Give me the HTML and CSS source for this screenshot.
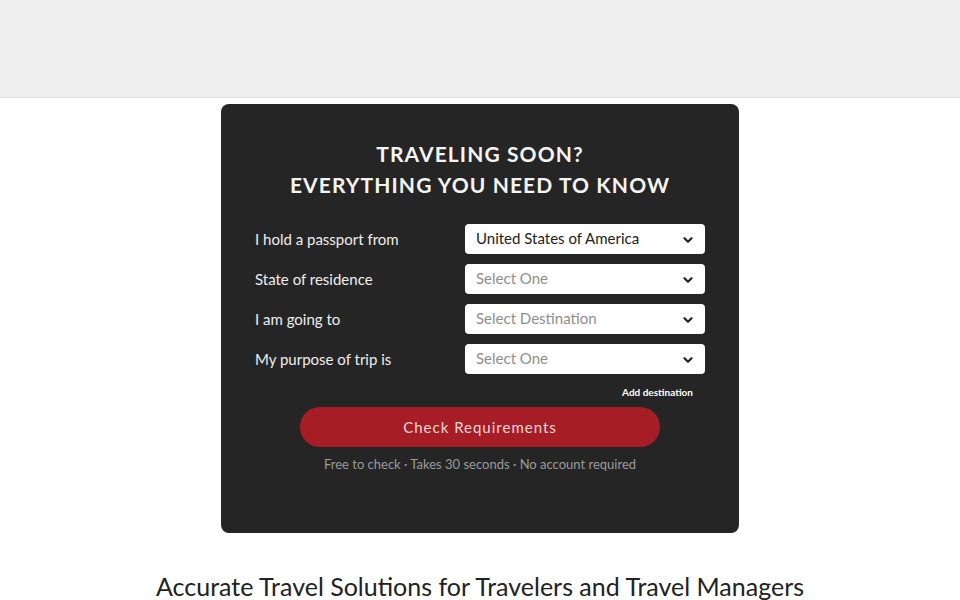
FILE: index.html
```html
<!DOCTYPE html>
<html lang="en">
<head>
<meta charset="utf-8">
<title>Traveling Soon?</title>
<link rel="stylesheet" href="styles.css">
</head>
<body>
<header class="topbar"></header>
<main class="main">
  <section class="card">
    <h1 class="card-title">TRAVELING SOON?<br>EVERYTHING YOU NEED TO KNOW</h1>
    <form class="form">
      <div class="row">
        <label class="label">I hold a passport from</label>
        <div class="select"><span class="value">United States of America</span><svg class="chev" viewBox="0 0 10 6"><path d="M1.5 1.2l3.5 3.5 3.5-3.5" fill="none" stroke="#222" stroke-width="2.2" stroke-linecap="round" stroke-linejoin="round"/></svg></div>
      </div>
      <div class="row">
        <label class="label">State of residence</label>
        <div class="select"><span class="placeholder">Select One</span><svg class="chev" viewBox="0 0 10 6"><path d="M1.5 1.2l3.5 3.5 3.5-3.5" fill="none" stroke="#222" stroke-width="2.2" stroke-linecap="round" stroke-linejoin="round"/></svg></div>
      </div>
      <div class="row">
        <label class="label">I am going to</label>
        <div class="select"><span class="placeholder">Select Destination</span><svg class="chev" viewBox="0 0 10 6"><path d="M1.5 1.2l3.5 3.5 3.5-3.5" fill="none" stroke="#222" stroke-width="2.2" stroke-linecap="round" stroke-linejoin="round"/></svg></div>
      </div>
      <div class="row">
        <label class="label">My purpose of trip is</label>
        <div class="select"><span class="placeholder">Select One</span><svg class="chev" viewBox="0 0 10 6"><path d="M1.5 1.2l3.5 3.5 3.5-3.5" fill="none" stroke="#222" stroke-width="2.2" stroke-linecap="round" stroke-linejoin="round"/></svg></div>
      </div>
      <div class="add-row"><a class="add-link">Add destination</a></div>
      <button class="cta" type="button">Check Requirements</button>
      <p class="note">Free to check · Takes 30 seconds · No account required</p>
    </form>
  </section>
  <h2 class="tagline">Accurate Travel Solutions for Travelers and Travel Managers</h2>
</main>
</body>
</html>
```
FILE: styles.css
```css
* { box-sizing: border-box; }
html, body { margin: 0; padding: 0; }
body {
  background: #ffffff;
  font-family: Lato, "Noto Sans", sans-serif;
  color: #222;
}
.topbar {
  height: 98px;
  background: #efefef;
  border-bottom: 1px solid #e4e4e4;
}
.main {
  padding-top: 6px;
}
.card {
  width: 518px;
  height: 429px;
  margin: 0 auto;
  background: #252525;
  border-radius: 8px;
  padding: 34px 34px 0;
}
.card-title {
  margin: 0;
  text-align: center;
  color: #f4f4f4;
  font-size: 21px;
  line-height: 31px;
  font-weight: 700;
  letter-spacing: 1.1px;
}
.form {
  margin: 24px 0 0;
  display: flex;
  flex-direction: column;
}
.row {
  display: grid;
  grid-template-columns: 210px 240px;
  align-items: center;
  margin-bottom: 10px;
}
.label {
  color: #eeeeee;
  font-size: 15px;
}
.select {
  height: 30px;
  background: #fff;
  border-radius: 4px;
  display: flex;
  align-items: center;
  justify-content: space-between;
  padding: 0 12px 2px 11px;
  font-size: 15px;
}
.value { color: #222; }
.placeholder { color: #8e8e8e; }
.chev { width: 10px; height: 6px; margin-top: 3px; }
.add-row {
  display: flex;
  justify-content: flex-end;
  padding-right: 12px;
  height: 16px;
}
.add-link {
  color: #fff;
  font-size: 10px;
  font-weight: 700;
  line-height: 16px;
}
.cta {
  align-self: center;
  width: 360px;
  height: 40px;
  margin-top: 7px;
  border: none;
  border-radius: 20px;
  background: #a71d25;
  color: #f3d6d6;
  font-family: inherit;
  font-size: 15px;
  letter-spacing: 1px;
}
.note {
  margin: 8px 0 0;
  text-align: center;
  color: #9a9a9a;
  font-size: 13px;
  line-height: 18px;
}
.tagline {
  margin: 39px 0 0;
  text-align: center;
  font-weight: 400;
  font-size: 25px;
  line-height: 28px;
  color: #222;
}
```
